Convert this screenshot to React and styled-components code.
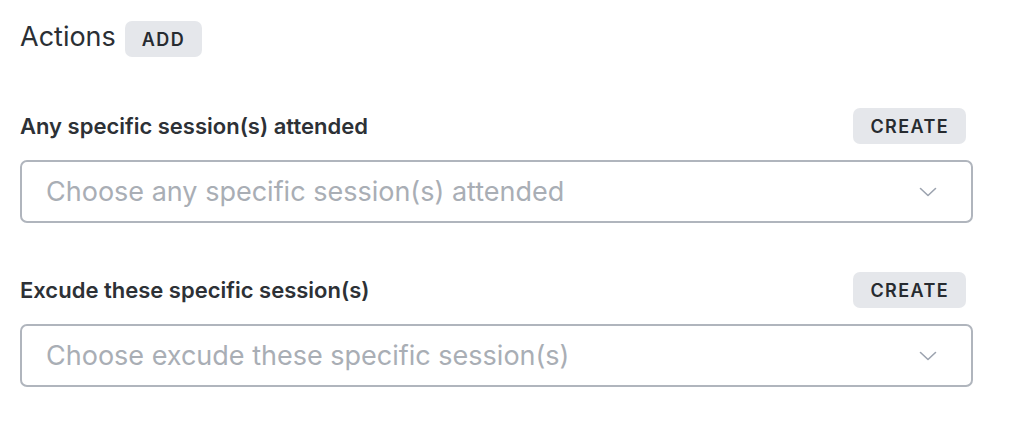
import React from 'react';
import styled, { createGlobalStyle } from 'styled-components';

const GlobalStyle = createGlobalStyle`
  html, body {
    margin: 0;
    padding: 0;
    background: #fff;
    font-family: Inter, "Liberation Sans", sans-serif;
  }
`;

const Page = styled.div`
  width: 953px;
  padding: 21px 0 0 20px;
`;

const Header = styled.div`
  display: flex;
  align-items: center;
  gap: 9px;
  margin-bottom: 51px;
`;

const Title = styled.h2`
  margin: 0;
  font-size: 27px;
  font-weight: 400;
  color: #2b2f34;
  line-height: 32px;
  margin-top: -4px;
`;

const Pill = styled.button`
  height: 36px;
  padding: 0 ${(p) => p.$pad}px;
  border: none;
  border-radius: 7px;
  background: #e5e7eb;
  color: #272b30;
  font-family: Inter, "Liberation Sans", sans-serif;
  font-size: 18px;
  font-weight: 600;
  letter-spacing: 1.4px;
  cursor: pointer;
`;

const Section = styled.div`
  margin-bottom: 49px;
`;

const LabelRow = styled.div`
  display: flex;
  align-items: center;
  justify-content: space-between;
  padding-right: 7px;
  margin-bottom: 16px;
`;

const Label = styled.label`
  font-size: 22px;
  font-weight: 600;
  color: #2d3136;
`;

const Select = styled.div`
  box-sizing: border-box;
  height: 63px;
  display: flex;
  align-items: center;
  justify-content: space-between;
  padding: 0 34px 0 24px;
  border: 2px solid #b0b5bd;
  border-radius: 7px;
`;

const Placeholder = styled.span`
  font-size: 27px;
  color: #a9aeb5;
`;

const Chevron = () => (
  <svg width="18" height="10" viewBox="0 0 18 10" fill="none">
    <path d="M1.5 1.5L9 8.5L16.5 1.5" stroke="#9ca3af" strokeWidth="1.6" strokeLinecap="round" strokeLinejoin="round" />
  </svg>
);

const fields = [
  { label: 'Any specific session(s) attended', placeholder: 'Choose any specific session(s) attended' },
  { label: 'Excude these specific session(s)', placeholder: 'Choose excude these specific session(s)' },
];

export default function App() {
  return (
    <>
      <GlobalStyle />
      <Page>
        <Header>
          <Title>Actions</Title>
          <Pill $pad={17}>ADD</Pill>
        </Header>
        {fields.map((f) => (
          <Section key={f.label}>
            <LabelRow>
              <Label>{f.label}</Label>
              <Pill $pad={17}>CREATE</Pill>
            </LabelRow>
            <Select>
              <Placeholder>{f.placeholder}</Placeholder>
              <Chevron />
            </Select>
          </Section>
        ))}
      </Page>
    </>
  );
}
